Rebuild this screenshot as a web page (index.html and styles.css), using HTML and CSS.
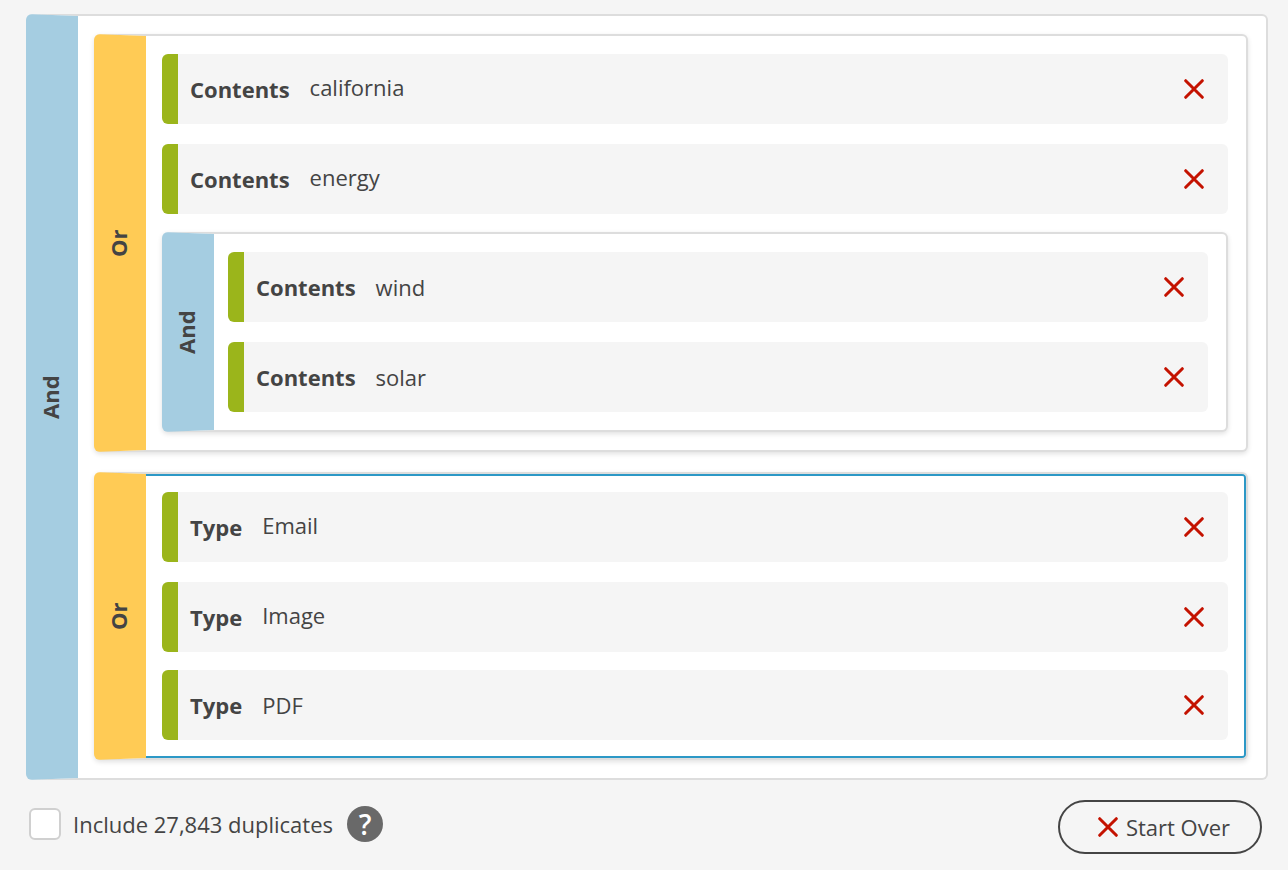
FILE: index.html
```html
<!DOCTYPE html>
<html lang="en">
  <head>
    <meta charset="UTF-8" />
    <meta name="viewport" content="width=device-width, initial-scale=1.0" />
    <title>Search Builder</title>
    <link rel="stylesheet" href="styles.css">
  </head>
  <body>
    <!-- Shared remove icon -->
    <svg class="sprite" aria-hidden="true">
      <symbol id="cross" viewBox="0 0 20 20">
        <path d="M1.7 1.7 L18.3 18.3 M18.3 1.7 L1.7 18.3" />
      </symbol>
    </svg>
    <main class="builder">
      <section class="group and">
        <div class="group-label">And</div>
        <div class="items">
          <section class="group or">
            <div class="group-label">Or</div>
            <div class="items">
              <div class="rule">
                <span class="rule-field">Contents</span>
                <span class="rule-value editable">california</span>
                <button type="button" class="remove" aria-label="Remove california"><svg class="cross"><use href="#cross" /></svg></button>
              </div>
              <div class="rule">
                <span class="rule-field">Contents</span>
                <span class="rule-value editable">energy</span>
                <button type="button" class="remove" aria-label="Remove energy"><svg class="cross"><use href="#cross" /></svg></button>
              </div>
              <section class="group and nested">
                <div class="group-label">And</div>
                <div class="items">
                  <div class="rule">
                    <span class="rule-field">Contents</span>
                    <span class="rule-value">wind</span>
                    <button type="button" class="remove" aria-label="Remove wind"><svg class="cross"><use href="#cross" /></svg></button>
                  </div>
                  <div class="rule">
                    <span class="rule-field">Contents</span>
                    <span class="rule-value">solar</span>
                    <button type="button" class="remove" aria-label="Remove solar"><svg class="cross"><use href="#cross" /></svg></button>
                  </div>
                </div>
              </section>
            </div>
          </section>
          <section class="group or selected">
            <div class="group-label">Or</div>
            <div class="items">
              <div class="rule">
                <span class="rule-field">Type</span>
                <span class="rule-value editable">Email</span>
                <button type="button" class="remove" aria-label="Remove Email"><svg class="cross"><use href="#cross" /></svg></button>
              </div>
              <div class="rule">
                <span class="rule-field">Type</span>
                <span class="rule-value editable">Image</span>
                <button type="button" class="remove" aria-label="Remove Image"><svg class="cross"><use href="#cross" /></svg></button>
              </div>
              <div class="rule">
                <span class="rule-field">Type</span>
                <span class="rule-value">PDF</span>
                <button type="button" class="remove" aria-label="Remove PDF"><svg class="cross"><use href="#cross" /></svg></button>
              </div>
            </div>
          </section>
        </div>
      </section>
    </main>
    <footer class="footer">
      <div class="duplicates">
        <input type="checkbox" id="duplicates" />
        <label for="duplicates">Include 27,843 duplicates</label>
        <button type="button" class="help" title="About duplicates">?</button>
      </div>
      <button type="button" class="start-over"><svg class="cross"><use href="#cross" /></svg>Start Over</button>
    </footer>
  </body>
</html>
```

FILE: styles.css
```css
* {
  box-sizing: border-box;
}
body {
  margin: 0;
  background-color: #f5f5f5;
  color: #444;
  font-family: "Open Sans", sans-serif;
  font-size: 22px;
  line-height: 32px;
}
button {
  padding: 0;
  border: none;
  background: none;
  color: inherit;
  font: inherit;
  cursor: pointer;
}
.sprite {
  display: none;
}
.cross {
  display: block;
  width: 20px;
  height: 20px;
  fill: none;
  stroke: #c41200;
  stroke-width: 3;
  stroke-linecap: round;
}
.builder {
  padding: 14px 20px 0 26px;
}
/* Groups: the thick left border holds the operator label */
.group {
  display: flex;
  border: 2px solid #ddd;
  border-left-width: 52px;
  border-radius: 6px;
  background-color: #fff;
}
.group .group {
  box-shadow: 0 2px 5px rgba(0, 0, 0, 0.12);
}
.and {
  border-left-color: #a5cde1;
}
.or {
  border-left-color: #ffcb55;
}
.group .selected {
  box-shadow: inset 0 2px #2c98c6, inset 0 -2px #2c98c6, inset -2px 0 #2c98c6, 0 2px 5px rgba(0, 0, 0, 0.12);
}
.group-label {
  flex: none;
  width: 48px;
  margin: 0 4px 0 -52px;
  line-height: 48px;
  font-weight: 700;
  text-align: center;
  writing-mode: vertical-rl;
  transform: rotate(180deg);
}
.items {
  flex: 1;
  min-width: 0;
  padding: 18px 18px 18px 16px;
}
.nested > .items {
  padding-left: 14px;
}
.items > * + * {
  margin-top: 20px;
}
.items > :nth-child(3) {
  margin-top: 18px;
}
/* Rules */
.rule {
  display: flex;
  align-items: center;
  height: 70px;
  padding: 0 24px 0 12px;
  border-left: 16px solid #9bb51b;
  border-radius: 6px;
  background-color: #f5f5f5;
}
.rule-field {
  margin-right: 20px;
  font-weight: 700;
}
.editable {
  padding-bottom: 4px;
}
.remove {
  margin-left: auto;
}
/* Footer */
.footer {
  display: flex;
  justify-content: space-between;
  align-items: flex-start;
  padding: 20px 26px 12px 29px;
}
.duplicates {
  display: flex;
  align-items: center;
  padding-top: 6px;
}
.duplicates input {
  appearance: none;
  width: 32px;
  height: 32px;
  margin: 0 12px 0 0;
  border: 2px solid #d0d0d0;
  border-radius: 6px;
  background-color: #fff;
}
.duplicates input:checked {
  background-color: #2c98c6;
}
.help {
  width: 36px;
  height: 36px;
  margin-left: 14px;
  border-radius: 50%;
  background-color: #696969;
  color: #fff;
  font-size: 28px;
  font-weight: 600;
  line-height: 36px;
}
.start-over {
  display: flex;
  align-items: center;
  gap: 8px;
  height: 54px;
  padding: 0 30px 0 38px;
  border: 2px solid #444;
  border-radius: 27px;
}
```
